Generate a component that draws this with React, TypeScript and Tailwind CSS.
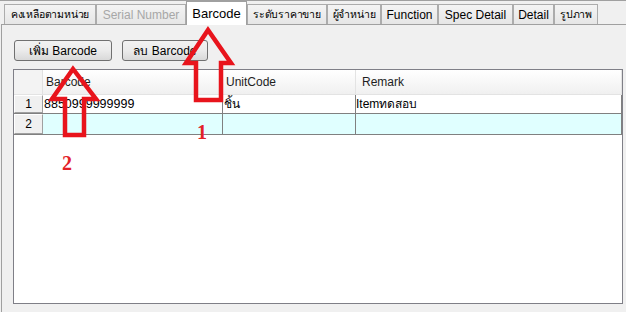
import React from "react";

const tabs = [
  { label: "คงเหลือตามหน่วย", w: "w-[92px]", kind: "normal", thai: true },
  { label: "Serial Number", w: "w-[90px]", kind: "disabled", thai: false },
  { label: "Barcode", w: "w-[61px]", kind: "selected", thai: false },
  { label: "ระดับราคาขาย", w: "w-[80px]", kind: "normal", thai: true },
  { label: "ผู้จำหน่าย", w: "w-[54px]", kind: "normal", thai: true },
  { label: "Function", w: "w-[57px]", kind: "normal", thai: false },
  { label: "Spec Detail", w: "w-[75px]", kind: "normal", thai: false },
  { label: "Detail", w: "w-[41px]", kind: "normal", thai: false },
  { label: "รูปภาพ", w: "w-[44px]", kind: "normal", thai: true },
];

function Tab({ label, w, kind, thai }: { label: string; w: string; kind: string; thai: boolean }) {
  if (kind === "selected") {
    return (
      <div
        className={`${w} h-[24px] -mb-px relative z-10 bg-white border-l border-t border-r border-[#a0a0a0] flex items-center justify-center text-[13px] text-black`}
      >
        {label}
      </div>
    );
  }
  return (
    <div
      className={`${w} h-[20px] bg-gradient-to-b from-[#f4f4f4] to-[#e6e6e6] border-l border-t border-r border-[#acacac] flex items-center justify-center whitespace-nowrap overflow-hidden ${
        thai ? "text-[10.5px] tracking-[-0.2px]" : "text-[12px]"
      } ${kind === "disabled" ? "text-[#a7a7a7]" : "text-black"}`}
    >
      {label}
    </div>
  );
}

function Btn({ label, w }: { label: string; w: string }) {
  return (
    <div
      className={`${w} h-[21px] rounded-[3px] border border-[#707070] bg-gradient-to-b from-[#f2f2f2] via-[#ebebeb] to-[#d9d9d9] flex items-center justify-center text-[12px] text-black`}
    >
      {label}
    </div>
  );
}

function RowHead({ n, h }: { n: string; h: string }) {
  return (
    <div
      className={`w-[29px] ${h} bg-[#f0f0f0] border-t border-l border-white border-r border-b border-r-[#a0a0a0] border-b-[#a0a0a0] flex items-center justify-center text-[12px] text-black`}
    >
      {n}
    </div>
  );
}

export default function App() {
  return (
    <div className="w-[626px] h-[312px] bg-[#f0f0f0] relative overflow-hidden border-t border-[#a0a0a0] font-['Liberation_Sans','Noto_Sans','DejaVu_Sans',sans-serif]">
      {/* tab strip */}
      <div className="flex items-end h-[23px] pl-[4px]">
        {tabs.map((t) => (
          <Tab key={t.label} {...t} />
        ))}
      </div>

      {/* panel */}
      <div className="ml-[1px] h-[300px] border-l border-t border-[#a0a0a0] pt-[15px] pl-[12px]">
        <div className="flex gap-[10px]">
          <Btn label="เพิ่ม Barcode" w="w-[98px]" />
          <Btn label="ลบ Barcode" w="w-[86px]" />
        </div>

        {/* grid */}
        <div className="mt-[8px] -ml-px w-[610px] h-[235px] border border-[#7f7f87] bg-white flex flex-col">
          {/* header */}
          <div className="flex h-[25px] border-b border-[#e3e3e3]">
            <div className="w-[29px] bg-[#f3f3f3] border-r border-[#e0e0e0]" />
            <div className="w-[180px] bg-gradient-to-b from-white to-[#f0f0f0] border-r border-[#e3e3e3] flex items-center pl-[3px] text-[12px] text-[#1e1e1e]">
              Barcode
            </div>
            <div className="w-[133px] bg-gradient-to-b from-white to-[#f0f0f0] border-r border-[#e3e3e3] flex items-center pl-[3px] text-[12px] text-[#1e1e1e]">
              UnitCode
            </div>
            <div className="flex-1 bg-gradient-to-b from-white to-[#f0f0f0] border-r border-[#e3e3e3] flex items-center pl-[6px] text-[12px] text-[#1e1e1e]">
              Remark
            </div>
          </div>
          {/* row 1 */}
          <div className="flex h-[19px] border-b border-[#808080]">
            <RowHead n="1" h="h-[18px]" />
            <div className="w-[180px] bg-white border-r border-[#808080] flex items-center pl-[1px] text-[12.5px] text-black">
              8850999999999
            </div>
            <div className="w-[133px] bg-white border-r border-[#808080] flex items-center pl-[1px] text-[12px] text-black">
              ชิ้น
            </div>
            <div className="flex-1 bg-white border-r border-[#808080] flex items-center text-[12px] text-black">
              Itemทดสอบ
            </div>
          </div>
          {/* row 2 */}
          <div className="flex h-[21px] border-b border-[#808080]">
            <RowHead n="2" h="h-[20px]" />
            <div className="w-[180px] bg-[#e0ffff] border-r border-[#808080]" />
            <div className="w-[133px] bg-[#e0ffff] border-r border-[#808080]" />
            <div className="flex-1 bg-[#e0ffff] border-r border-[#808080]" />
          </div>
          <div className="flex-1 bg-white" />
        </div>
      </div>

      {/* annotation arrows */}
      <svg
        className="absolute left-0 top-0 pointer-events-none"
        width="626"
        height="312"
        viewBox="0 0 626 312"
      >
        <polygon
          points="208,29 186,62 196,62 196,99 221,99 221,62 231,62"
          fill="none"
          stroke="#e8141c"
          strokeWidth="4.5"
          strokeLinejoin="miter"
        />
        <polygon
          points="73,68 52,98 65,98 65,134 84,134 84,98 96,98"
          fill="none"
          stroke="#e8141c"
          strokeWidth="4.5"
          strokeLinejoin="miter"
        />
      </svg>
      <div className="absolute left-[197px] top-[121px] text-[20px] leading-none font-bold text-[#e32228] font-['Liberation_Serif',serif]">
        1
      </div>
      <div className="absolute left-[62px] top-[152px] text-[20px] leading-none font-bold text-[#e32228] font-['Liberation_Serif',serif]">
        2
      </div>
    </div>
  );
}
